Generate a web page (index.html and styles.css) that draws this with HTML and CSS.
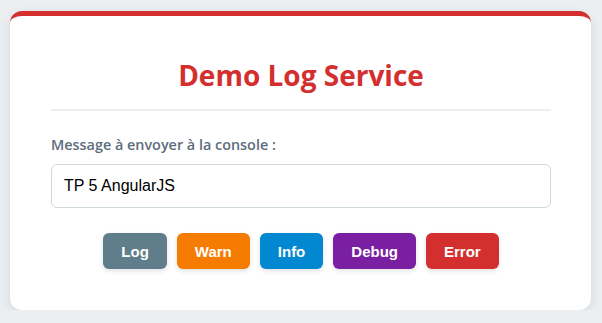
FILE: index.html
```html
<!DOCTYPE html>
<html lang="fr">
<head>
  <meta charset="UTF-8">
  <title>Demo Log Service</title>
  <link rel="stylesheet" href="styles.css">
</head>
<body>

  <div class="card">
    <h1 class="title">Demo Log Service</h1>

    <label class="label" for="message">Message à envoyer à la console :</label>
    <input type="text" id="message" class="message" value="TP 5 AngularJS">

    <div class="button-container">
      <button class="btn log">Log</button>
      <button class="btn warn">Warn</button>
      <button class="btn info">Info</button>
      <button class="btn debug">Debug</button>
      <button class="btn error">Error</button>
    </div>
  </div>

</body>
</html>
```

FILE: styles.css
```css
body {
  font-family: "Open Sans", sans-serif;
  background-color: #eceff1;
  margin: 0;
  padding: 11px 11px 0 10px;
}

.card {
  background: #ffffff;
  border-top: 5px solid #d32f2f;
  border-radius: 12px;
  box-shadow: 0 4px 12px rgba(0, 0, 0, 0.1);
  padding: 40px 40px 41px 41px;
}

.title {
  margin: 0 0 24px;
  padding-bottom: 15px;
  border-bottom: 2px solid #eeeeee;
  text-align: center;
  color: #d32f2f;
  font-size: 28px;
  font-weight: 700;
  line-height: 38px;
}

.label {
  display: block;
  margin-bottom: 9px;
  color: #5d6d7b;
  font-size: 14.4px;
  font-weight: 600;
  line-height: 20px;
}

.message {
  display: block;
  box-sizing: border-box;
  width: 100%;
  height: 44px;
  padding: 0 12px;
  border: 1px solid #cfd8dc;
  border-radius: 6px;
  font-family: "Liberation Sans", Arial, sans-serif;
  font-size: 16px;
  color: #000;
}

.button-container {
  display: flex;
  justify-content: center;
  gap: 10px;
  margin-top: 25px;
}

.btn {
  height: 36px;
  padding: 0 18px;
  border: none;
  border-radius: 6px;
  color: #fff;
  font-family: "Liberation Sans", Arial, sans-serif;
  font-size: 15px;
  font-weight: 700;
  cursor: pointer;
  box-shadow: 0 2px 5px rgba(0, 0, 0, 0.12);
}

.log { background-color: #607d8b; }
.warn { background-color: #f57c00; }
.info { background-color: #0288d1; }
.debug { background-color: #7b1fa2; }
.error { background-color: #d32f2f; }
```
